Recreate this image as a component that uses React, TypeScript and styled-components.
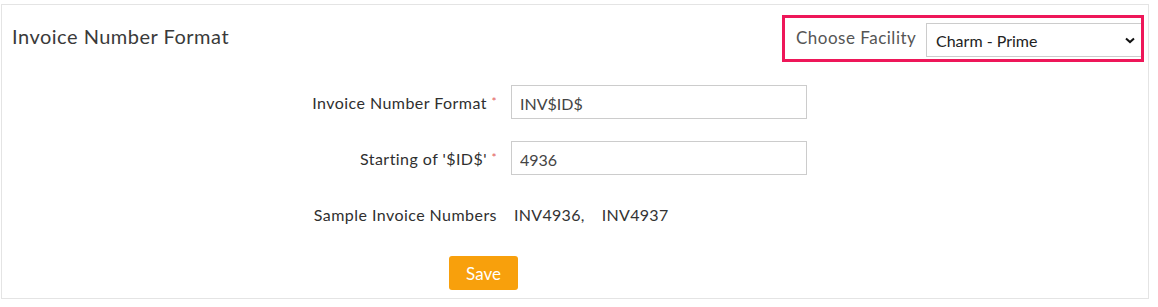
import React, { useState } from "react";
import styled, { createGlobalStyle } from "styled-components";

const GlobalStyle = createGlobalStyle`
	body {
		margin: 0;
		background: #ffffff;
		font-family: Lato, "Open Sans", sans-serif;
	}
`;

const App = () => {
	const [facility, setFacility] = useState("prime");
	const [format, setFormat] = useState("INV$ID$");
	const [start, setStart] = useState("4936");

	return (
		<Page>
			<GlobalStyle />
			<Panel>
				<Header>
					<Title>Invoice Number Format</Title>
					<FacilityBox>
						<FacilityLabel>Choose Facility</FacilityLabel>
						<SelectWrap>
							<Select value={facility} onChange={(e) => setFacility(e.target.value)}>
								<option value="prime">Charm - Prime</option>
								<option value="north">Charm - North</option>
							</Select>
							<Chevron viewBox="0 0 10 6" aria-hidden="true">
								<path d="M1 1l4 3.6L9 1" />
							</Chevron>
						</SelectWrap>
					</FacilityBox>
				</Header>

				<Form>
					<Label>
						Invoice Number Format <Required>*</Required>
					</Label>
					<Input value={format} onChange={(e) => setFormat(e.target.value)} />

					<Label>
						Starting of '$ID$' <Required>*</Required>
					</Label>
					<Input value={start} onChange={(e) => setStart(e.target.value)} />

					<Label>Sample Invoice Numbers</Label>
					<Samples>
						<span>INV{start},</span>
						<span>INV{Number(start) + 1}</span>
					</Samples>

					<Actions>
						<SaveButton type="button">Save</SaveButton>
					</Actions>
				</Form>
			</Panel>
		</Page>
	);
};

export default App;

const Page = styled.div`
	padding: 4px 9px 8px 1px;
`;

const Panel = styled.section`
	border: 1px solid #e4e4e4;
	height: 295px;
	box-sizing: border-box;
	display: flex;
	flex-direction: column;
`;

const Header = styled.div`
	display: flex;
	align-items: center;
	justify-content: space-between;
	padding: 10px 4px 0 10px;
`;

const Title = styled.h3`
	margin: 0 0 6px;
	font-size: 20px;
	letter-spacing: 0.5px;
	font-weight: 400;
	color: #3a3a3a;
`;

const FacilityBox = styled.div`
	display: flex;
	align-items: center;
	justify-content: space-between;
	width: 362px;
	height: 47px;
	box-sizing: border-box;
	border: 3px solid #ee1759;
	padding: 2px 0 0 11px;
`;

const FacilityLabel = styled.span`
	font-size: 17px;
	letter-spacing: 0.5px;
	color: #555555;
	margin-bottom: 5px;
`;

const SelectWrap = styled.div`
	position: relative;
	width: 215px;
	display: flex;
`;

const Select = styled.select`
	appearance: none;
	flex: 1;
	height: 34px;
	border: 1px solid #cccccc;
	border-right: none;
	border-radius: 0;
	background: #ffffff;
	padding: 2px 0 0 9px;
	font-family: Lato, "Open Sans", sans-serif;
	font-size: 16px;
	color: #222222;
	outline: none;
`;

const Chevron = styled.svg`
	position: absolute;
	right: 6px;
	top: 14px;
	width: 10px;
	height: 7px;
	fill: none;
	stroke: #111111;
	stroke-width: 2;
	pointer-events: none;
`;

const Form = styled.div`
	display: grid;
	grid-template-columns: 485px 296px;
	column-gap: 14px;
	row-gap: 22px;
	align-items: center;
	margin: 23px 0 0 10px;
`;

const Label = styled.label`
	justify-self: end;
	font-size: 16px;
	letter-spacing: 0.45px;
	color: #2f2f2f;
	white-space: nowrap;
`;

const Required = styled.span`
	color: #e25c5c;
	font-size: 12px;
	position: relative;
	top: -3px;
`;

const Input = styled.input`
	height: 34px;
	box-sizing: border-box;
	border: 1px solid #cccccc;
	padding: 2px 8px 0;
	font-family: Lato, "Open Sans", sans-serif;
	font-size: 16px;
	color: #444444;
	outline: none;
`;

const Samples = styled.div`
	display: flex;
	gap: 17px;
	height: 34px;
	align-items: center;
	padding-left: 3px;
	font-size: 16px;
	letter-spacing: 0.3px;
	color: #333333;
`;

const Actions = styled.div`
	grid-column: 1 / -1;
	padding-left: 437px;
	margin-top: 3px;
`;

const SaveButton = styled.button`
	width: 69px;
	height: 34px;
	border: none;
	border-radius: 3px;
	background: #f8a00c;
	color: #ffffff;
	font-family: Lato, "Open Sans", sans-serif;
	font-size: 17px;
	cursor: pointer;
`;
